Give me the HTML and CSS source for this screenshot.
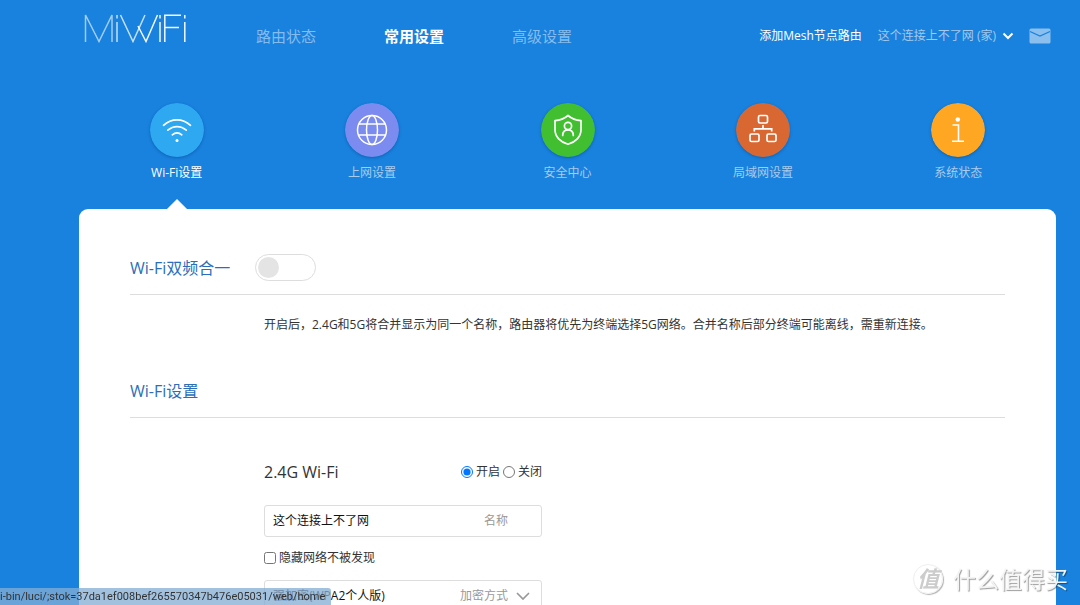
FILE: index.html
```html
<!DOCTYPE html>
<html lang="zh-CN">
<head>
<meta charset="utf-8">
<meta name="viewport" content="width=device-width, initial-scale=1">
<title>MiWiFi</title>
<link rel="stylesheet" href="styles.css">
</head>
<body>
<div class="page">
  <header class="header">
    <a class="logo" href="#" aria-label="MiWiFi">
      <svg width="104" height="30" viewBox="0 0 104 30" fill="none" stroke="#fff" stroke-width="1.5">
        <g opacity=".6"><path d="M1.5 29V2L15 28.500 28 2v27"/></g>
        <g opacity=".75"><path d="M33 9v20M33 2v3.500M36.500 2 49 28.500 61 2"/></g>
        <g opacity=".95"><path d="M54 13 62 28.500 73.500 2M76 9v20M76 2v3.500M80.800 29V2.200H97M80.800 14.500H95M100.800 9v20M100.800 2v3.500"/></g>
      </svg>
    </a>
    <nav class="nav">
      <a href="#">路由状态</a>
      <a href="#" class="current">常用设置</a>
      <a href="#">高级设置</a>
    </nav>
    <div class="account">
      <a href="#" class="mesh">添加Mesh节点路由</a>
      <button type="button" class="router">这个连接上不了网 (家)
        <svg width="12" height="8" viewBox="0 0 12 8" fill="none" stroke="#fff" stroke-width="2"><path d="M1.500 1.500 6 6l4.500-4.500"/></svg>
      </button>
      <button type="button" class="mail" aria-label="消息">
        <svg width="22" height="16" viewBox="0 0 22 16"><rect x=".5" y=".5" width="21" height="15" rx="1.500" fill="#8bbfee"/><path d="M1 3.500 11 8l10-4.500" fill="none" stroke="#1882de" stroke-width="1.300"/></svg>
      </button>
    </div>
  </header>

  <nav class="tabs">
    <a href="#" class="tab active">
      <svg class="disc" viewBox="0 0 54 54" fill="none" stroke="#fff" stroke-width="1.700" stroke-linecap="round"><circle cx="27" cy="27" r="27" fill="#2fa8f2" stroke="none"/><path d="M13.500 22.300c8-7.200 19-7.200 27 0M17.800 27.200c5.500-4.800 13-4.800 18.500 0M22.300 31.800c2.900-2.400 6.600-2.400 9.500 0"/><circle cx="27" cy="37.500" r="1.500" fill="#fff" stroke="none"/></svg>
      <span>Wi-Fi设置</span>
    </a>
    <a href="#" class="tab">
      <svg class="disc" viewBox="0 0 54 54" fill="none" stroke="#fff" stroke-width="1.500"><circle cx="27" cy="27" r="27" fill="#7b8bef" stroke="none"/><circle cx="27" cy="27" r="14.500"/><ellipse cx="27" cy="27" rx="5.500" ry="14.500"/><path d="M14 21h26M14 32h26"/></svg>
      <span>上网设置</span>
    </a>
    <a href="#" class="tab">
      <svg class="disc" viewBox="0 0 54 54" fill="none" stroke="#fff" stroke-width="1.700" stroke-linecap="round" stroke-linejoin="round"><circle cx="27" cy="27" r="27" fill="#42bf30" stroke="none"/><path d="M27 12.500c-3.500 3-8 4.800-13 5.200v9c0 7 5.500 12.500 13 14.500 7.500-2 13-7.500 13-14.500v-9c-5-.4-9.500-2.200-13-5.200z"/><circle cx="27" cy="23" r="3.600"/><path d="M21.700 32.500c0-3.800 2-5.700 5.300-5.700s5.300 1.900 5.300 5.700"/></svg>
      <span>安全中心</span>
    </a>
    <a href="#" class="tab">
      <svg class="disc" viewBox="0 0 54 54" fill="none" stroke="#fff" stroke-width="1.700"><circle cx="27" cy="27" r="27" fill="#d96732" stroke="none"/><rect x="22.500" y="12.500" width="9" height="7.500" rx="1.500"/><rect x="14" y="31" width="9" height="7.500" rx="1.500"/><rect x="31" y="31" width="9" height="7.500" rx="1.500"/><path d="M27 22v3.800M18.300 28.500v-2.700h17.400v2.700"/></svg>
      <span>局域网设置</span>
    </a>
    <a href="#" class="tab">
      <svg class="disc" viewBox="0 0 54 54" fill="none" stroke="#fff" stroke-width="1.600"><circle cx="27" cy="27" r="27" fill="#ffa623" stroke="none"/><circle cx="26.800" cy="16.500" r="2.300" fill="#fff" stroke="none"/><path d="M21.500 22h6v16M21 38.200h12"/></svg>
      <span>系统状态</span>
    </a>
  </nav>

  <main class="panel">
    <section class="section merge">
      <div class="section-head">
        <h2>Wi-Fi双频合一</h2>
        <input type="checkbox" class="switch" aria-label="Wi-Fi双频合一">
      </div>
      <p class="note">开启后，2.4G和5G将合并显示为同一个名称，路由器将优先为终端选择5G网络。合并名称后部分终端可能离线，需重新连接。</p>
    </section>
    <section class="section">
      <div class="section-head"><h2>Wi-Fi设置</h2></div>
      <form class="form">
        <div class="band">
          <h3>2.4G Wi-Fi</h3>
          <div class="radios">
            <label><input type="radio" name="on" checked>开启</label>
            <label><input type="radio" name="on">关闭</label>
          </div>
        </div>
        <div class="field">
          <input type="text" id="ssid" value="这个连接上不了网">
          <label for="ssid">名称</label>
        </div>
        <label class="hide"><input type="checkbox">隐藏网络不被发现</label>
        <div class="field choice">
          <select id="enc"><option>强加密(WPA2个人版)</option></select>
          <label for="enc">加密方式</label>
          <svg width="14" height="8" viewBox="0 0 14 8" fill="none" stroke="#999" stroke-width="1.700"><path d="M1 1l6 6 6-6"/></svg>
        </div>
      </form>
    </section>
  </main>
</div>
<div class="status">i-bin/luci/;stok=37da1ef008bef265570347b476e05031/web/home</div>
<div class="watermark"><span class="seal">值</span><span>什么值得买</span></div>
</body>
</html>
```
FILE: styles.css
```css
* { box-sizing: border-box; }
html, body { height: 100%; }
body {
  margin: 0;
  overflow: hidden;
  background: #1882de;
  color: #333;
  font: 12px/18px "Open Sans", "Noto Sans CJK SC", sans-serif;
}
a { color: inherit; text-decoration: none; }
button { padding: 0; border: 0; background: none; color: inherit; font: inherit; }
h2, h3, p { margin: 0; font-weight: 400; }
svg { display: block; flex: none; }
input, select { font: inherit; color: inherit; }
.page { padding: 0 24px 0 79px; }

.header { display: flex; align-items: center; height: 72px; }
.logo { width: 177px; padding: 0 0 16px 5px; }
.nav { display: flex; gap: 68px; font-size: 15px; color: #85bcee; }
.nav .current { color: #fff; font-weight: 700; }
.account { display: flex; align-items: center; margin-left: auto; padding-right: 5px; color: #fff; }
.router { display: flex; align-items: center; gap: 6px; margin: 0 15px 0 16px; color: #a3c9ed; }

.tabs { display: flex; padding-top: 31px; }
.tab {
  display: flex;
  flex: 1;
  flex-direction: column;
  align-items: center;
  gap: 7px;
  color: #a8cbed;
}
.disc { width: 54px; height: 54px; border-radius: 50%; box-shadow: 0 1px 3px rgba(0, 30, 80, .3); }
.tab.active { color: #fff; }
.tab::after {
  content: "";
  margin-top: 10px;
  border: solid transparent;
  border-width: 0 10px 10px;
}
.tab.active::after { border-bottom-color: #fff; }

.panel { min-height: 396px; padding: 38px 51px; border-radius: 9px; background: #fff; }
.merge { min-height: 123px; }
.section-head {
  display: flex;
  align-items: center;
  gap: 25px;
  height: 48px;
  padding-bottom: 6px;
  border-bottom: 1px solid #ddd;
}
.merge .section-head { margin-bottom: 21px; }
h2 { color: #2a6ebb; font-size: 16px; line-height: 24px; }
.switch {
  display: flex;
  align-items: center;
  width: 61px;
  height: 27px;
  margin: 0;
  padding: 2px;
  appearance: none;
  border: 1px solid #ddd;
  border-radius: 14px;
}
.switch::before { content: ""; width: 21px; height: 21px; border-radius: 50%; background: #e4e4e4; }
.switch:checked::before { margin-left: auto; background: #2fa8f2; }
.note { padding-left: 134px; }

.form { width: 412px; padding: 42px 0 0 134px; }
.band { display: flex; align-items: center; justify-content: space-between; height: 24px; margin-bottom: 21px; }
h3 { font-size: 16px; line-height: 24px; }
.radios { display: flex; gap: 3px; }
.radios label, .hide { display: flex; align-items: center; gap: 3px; }
.radios input, .hide input { width: 12px; height: 12px; margin: 0; }
.field {
  display: flex;
  align-items: center;
  height: 32px;
  padding: 0 33px 0 8px;
  border: 1px solid #ddd;
  border-radius: 3px;
  color: #999;
}
.field input, .field select {
  flex: 1;
  min-width: 0;
  padding: 0;
  appearance: none;
  border: 0;
  outline: 0;
  background: none;
  color: #111;
}
.hide { margin: 12px 0 13px; }
.choice { gap: 8px; padding-right: 11px; }

.status {
  position: fixed;
  bottom: 0;
  left: 0;
  padding: 0 6px 0 0;
  border-top-right-radius: 3px;
  background: rgba(132, 174, 213, .76);
  font-family: Roboto, sans-serif;
  font-size: 11px;
  line-height: 17px;
}
.watermark {
  position: fixed;
  right: 12px;
  bottom: 10px;
  display: flex;
  align-items: center;
  gap: 10px;
  color: #f4f4f4;
  font-size: 23px;
  line-height: 32px;
  text-shadow: 1px 1px 1px rgba(0, 0, 0, .4);
}
.seal {
  width: 30px;
  height: 30px;
  border: 1px solid #eee;
  border-radius: 50%;
  box-shadow: 1px 1px 1px rgba(0, 0, 0, .3);
  color: #ccc;
  font-size: 22px;
  font-style: italic;
  font-weight: 700;
  line-height: 26px;
  text-align: center;
  text-shadow: none;
}
```
